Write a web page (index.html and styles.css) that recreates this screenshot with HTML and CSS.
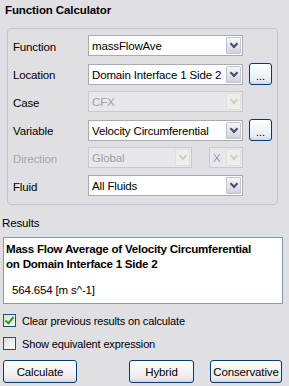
FILE: index.html
```html
<!DOCTYPE html>
<html lang="en">
  <head>
    <meta charset="UTF-8" />
    <title>Function Calculator</title>
    <link rel="stylesheet" href="styles.css">
  </head>
  <body>
    <div class="panel">
      <div class="title">Function Calculator</div>

      <div class="group">
        <div class="row">
          <span class="label">Function</span>
          <div class="combo"><span class="value">massFlowAve</span><span class="arrow"></span></div>
        </div>
        <div class="row">
          <span class="label">Location</span>
          <div class="combo"><span class="value">Domain Interface 1 Side 2</span><span class="arrow"></span></div>
          <button class="more">...</button>
        </div>
        <div class="row">
          <span class="label">Case</span>
          <div class="combo disabled"><span class="value">CFX</span><span class="arrow"></span></div>
        </div>
        <div class="row">
          <span class="label">Variable</span>
          <div class="combo"><span class="value">Velocity Circumferential</span><span class="arrow"></span></div>
          <button class="more">...</button>
        </div>
        <div class="row">
          <span class="label dim">Direction</span>
          <div class="pair">
            <div class="combo disabled wide"><span class="value">Global</span><span class="arrow"></span></div>
            <div class="combo disabled axis"><span class="value"><span class="axis-x">X</span></span><span class="arrow"></span></div>
          </div>
        </div>
        <div class="row last">
          <span class="label">Fluid</span>
          <div class="combo"><span class="value">All Fluids</span><span class="arrow"></span></div>
        </div>
      </div>

      <div class="results-label">Results</div>
      <div class="results">
        <div class="heading">Mass Flow Average of Velocity Circumferential<br>on Domain Interface 1 Side 2</div>
        <div class="result-value">564.654 [m s^-1]</div>
      </div>

      <label class="check"><span class="box checked"></span>Clear previous results on calculate</label>
      <label class="check"><span class="box"></span>Show equivalent expression</label>

      <div class="actions">
        <button class="btn calc">Calculate</button>
        <div class="right">
          <button class="btn hybrid">Hybrid</button>
          <button class="btn cons">Conservative</button>
        </div>
      </div>
    </div>
  </body>
</html>
```

FILE: styles.css
```css
* {
  box-sizing: border-box;
}

body {
  margin: 0;
  background: #e0dfe3;
  font-family: "Liberation Sans", Arial, sans-serif;
  font-size: 11px;
  letter-spacing: -0.15px;
  color: #000;
}

.panel {
  width: 289px;
  height: 386px;
  overflow: hidden;
}

.title {
  font-weight: bold;
  font-size: 11.5px;
  letter-spacing: -0.1px;
  padding: 4px 5px 0;
  height: 28px;
}

.group {
  margin: 0 11px 0 7px;
  border: 1px solid #c6c5cb;
  border-radius: 4px;
  padding: 6px 5px 8px 4px;
}

.row {
  display: grid;
  grid-template-columns: 70px 155px 23px;
  column-gap: 6px;
  align-items: center;
  height: 21px;
  margin-bottom: 7px;
}

.row.last {
  margin-bottom: 0;
}

.label {
  padding-left: 1px;
  padding-top: 2px;
  font-size: 11.5px;
}

.label.dim {
  color: #a7a6aa;
}

.combo {
  display: flex;
  align-items: stretch;
  height: 21px;
  border: 1px solid #a5acb2;
  background: #fff;
  padding: 1px;
}

.combo .value {
  flex: 1;
  padding-left: 2px;
  line-height: 18px;
  font-size: 11.5px;
  white-space: nowrap;
  overflow: hidden;
}

.combo .arrow {
  width: 15px;
  border: 1px solid #c3c3d0;
  border-radius: 1px;
  background: linear-gradient(#f6f6f9, #d2d2de);
  position: relative;
}

.combo .arrow::after {
  content: "";
  position: absolute;
  left: 4px;
  top: 3px;
  width: 4px;
  height: 4px;
  border-right: 2px solid #3e4e6e;
  border-bottom: 2px solid #3e4e6e;
  transform: rotate(45deg);
}

.combo.disabled {
  border-color: #c9c8cc;
  background: #e8e7eb;
}

.combo.disabled .value {
  color: #a19fa5;
}

.combo.disabled .arrow {
  border-color: #e0dfdb;
  background: #efeee8;
}

.combo.disabled .arrow::after {
  border-color: #cfcec8;
}

.pair {
  display: flex;
  justify-content: space-between;
}

.combo.wide {
  width: 104px;
}

.combo.axis {
  width: 34px;
}

.axis-x {
  background: linear-gradient(90deg, #b08c9c, #7a8ec8);
  -webkit-background-clip: text;
  background-clip: text;
  color: transparent;
}

.more {
  width: 23px;
  height: 22px;
  border: 1px solid #003c74;
  border-radius: 3px;
  background: linear-gradient(#ffffff, #ecebf0 80%, #d6d5de);
  font-family: "Liberation Sans", Arial, sans-serif;
  font-size: 11px;
  padding: 4px 0 0;
  color: #000;
}

.results-label {
  padding: 12px 2px 0;
  height: 32px;
  font-size: 11.5px;
}

.results {
  margin: 0 6px 0 3px;
  height: 67px;
  border: 1px solid #7f9db9;
  background: #fff;
  padding: 3px 4px 0 2px;
}

.heading {
  font-weight: bold;
  font-size: 11.6px;
  letter-spacing: -0.25px;
  line-height: 15px;
}

.result-value {
  padding: 13px 0 0 6px;
  font-size: 11.5px;
}

.check {
  display: flex;
  align-items: center;
  gap: 6px;
  height: 13px;
  margin: 10px 0 0 3px;
  font-size: 11px;
}

.check + .check {
  margin-top: 10px;
}

.box {
  width: 13px;
  height: 13px;
  border: 1px solid #1c5180;
  background: linear-gradient(135deg, #dcdcd7, #ffffff);
  position: relative;
}

.box.checked::after {
  content: "";
  position: absolute;
  left: 3px;
  top: 0px;
  width: 3px;
  height: 7px;
  border-right: 2px solid #21a121;
  border-bottom: 2px solid #21a121;
  transform: rotate(40deg);
}

.actions {
  display: flex;
  justify-content: space-between;
  margin: 10px 7px 0 3px;
}

.right {
  display: flex;
  gap: 16px;
}

.btn {
  height: 23px;
  border: 1px solid #003c74;
  border-radius: 3px;
  background: linear-gradient(#ffffff, #ecebf0 80%, #d6d5de);
  font-family: "Liberation Sans", Arial, sans-serif;
  font-size: 11.5px;
  letter-spacing: -0.15px;
  color: #000;
  padding: 0;
}

.calc {
  width: 74px;
}

.hybrid {
  width: 65px;
}

.cons {
  width: 72px;
}
```
